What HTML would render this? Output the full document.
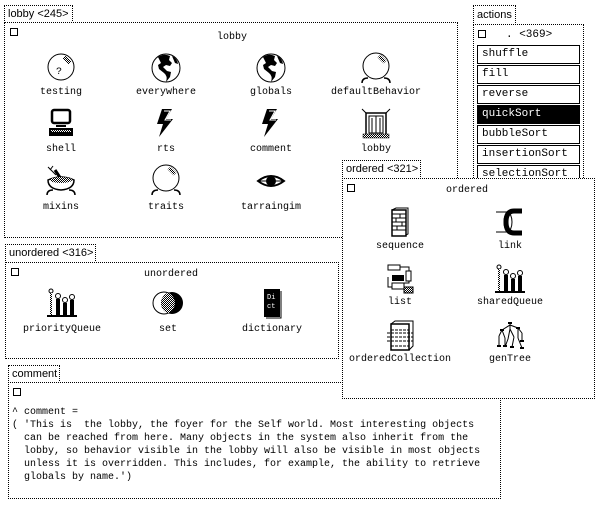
<!DOCTYPE html>
<html><head><meta charset="utf-8"><style>
*{margin:0;padding:0;box-sizing:border-box}
body{width:600px;height:506px;background:#fff;position:relative;overflow:hidden;font-family:"Liberation Mono",monospace;font-size:10px;color:#000}
.box{position:absolute;border:1px dotted #000;background:#fff}
.tab{position:absolute;border:1px dotted #000;border-bottom:none;background:#fff;font-family:"Liberation Sans",sans-serif;font-size:11px;line-height:16px;padding-left:3px}
.cb{position:absolute;width:8px;height:8px;border:1px solid #000}
.lab{position:absolute;width:160px;margin-left:-80px;text-align:center;line-height:12px;white-space:nowrap}
.ic{position:absolute;width:32px;height:32px;margin-left:-16px}
.btn{position:absolute;left:3px;width:103px;height:19px;border:1px solid #000;padding-left:4px;line-height:17px;font-size:11px}
pre{font-family:"Liberation Mono",monospace;font-size:10px;line-height:13px;position:absolute}
.top{z-index:5}
</style></head><body>
<svg width="0" height="0" style="position:absolute">
<defs>
<pattern id="hat" width="2" height="2" patternUnits="userSpaceOnUse"><rect width="2" height="2" fill="#fff"/><rect width="1" height="1" fill="#000"/><rect x="1" y="1" width="1" height="1" fill="#000"/></pattern>
<symbol id="ball" viewBox="0 0 32 32"><circle cx="16" cy="15" r="13" fill="#fff" stroke="#000"/><path d="M19 5l6 6" stroke="url(#hat)" stroke-width="4"/></symbol>
<symbol id="stand" viewBox="0 0 32 32"><circle cx="16" cy="14" r="13" fill="#fff" stroke="#000"/><path d="M19 4l6 6" stroke="url(#hat)" stroke-width="4"/><path d="M2 31q0-5 6-5M30 31q0-5-6-5" fill="none" stroke="#000" stroke-width="1.5"/></symbol>
<symbol id="globe" viewBox="0 0 32 32"><circle cx="16" cy="16" r="14" fill="#fff" stroke="#000"/><path d="M8 5q6-4 12-1l-1 4 3 3-2 3-4-1-3 2 4 4 4 1-1 5-4 5q2-6-2-9l-5-4-1-4 3-2z" fill="#000"/><path d="M22 4q5 2 6 8l-3-1z" fill="#000"/></symbol>
<symbol id="bolt" viewBox="0 0 32 32"><path d="M12 2h10l-6 10h7l-14 18 4-13h-6z" fill="#000"/><path d="M14 4h6l-5 9h6" fill="none" stroke="#fff" stroke-width="1"/></symbol>
<symbol id="shell" viewBox="0 0 32 32"><rect x="7" y="3" width="18" height="13" rx="2" fill="#fff" stroke="#000" stroke-width="2.5"/><rect x="11" y="18" width="10" height="2" fill="#000"/><rect x="4" y="21" width="24" height="8" fill="#000"/><rect x="6" y="23" width="20" height="2" fill="url(#hat)"/></symbol>
<symbol id="bld" viewBox="0 0 32 32"><path d="M2 2l5 5M30 2l-5 5" stroke="#000"/><rect x="6" y="6" width="20" height="22" fill="#fff" stroke="#000" stroke-width="1.5"/><rect x="9" y="9" width="14" height="17" fill="none" stroke="#000"/><path d="M16 9v17M12 11v15M20 11v15" stroke="#000"/><rect x="3" y="27" width="26" height="4" fill="url(#hat)" stroke="#000" stroke-width=".5"/></symbol>
<symbol id="bowl" viewBox="0 0 32 32"><path d="M3 3l8 8M8 2l-3 4" stroke="#000"/><path d="M10 6l8 12" stroke="#000" stroke-width="3"/><path d="M3 16q13-6 26 0q0 9-13 10q-13-1-13-10z" fill="#fff" stroke="#000" stroke-width="1.5"/><ellipse cx="16" cy="16" rx="11" ry="3" fill="url(#hat)"/><path d="M2 31q0-5 6-5M30 31q0-5-6-5" fill="none" stroke="#000" stroke-width="1.5"/></symbol>
<symbol id="eye" viewBox="0 0 32 32"><path d="M3 17q13-10 26 0q-13 10-26 0z" fill="#fff" stroke="#000" stroke-width="2"/><circle cx="16" cy="17" r="5" fill="#000"/><path d="M3 17h26" stroke="#000"/></symbol>
<symbol id="queue" viewBox="0 0 32 32"><circle cx="5" cy="4" r="2" fill="#fff" stroke="#000"/><path d="M5 6v22" stroke="url(#hat)" stroke-width="2"/><circle cx="12" cy="9" r="2.5" fill="#fff" stroke="#000"/><rect x="10" y="12" width="4" height="16" fill="#000"/><circle cx="19" cy="13" r="2.5" fill="#fff" stroke="#000"/><rect x="17" y="16" width="4" height="12" fill="#000"/><circle cx="26" cy="10" r="2.5" fill="#fff" stroke="#000"/><rect x="24" y="13" width="4" height="15" fill="#000"/><rect x="1" y="28" width="30" height="2" fill="#000"/></symbol>
<symbol id="set" viewBox="0 0 32 32"><circle cx="20" cy="16" r="11" fill="#000"/><circle cx="12" cy="16" r="11" fill="none" stroke="#000"/><path d="M16 5.8a11 11 0 0 1 0 20.4a11 11 0 0 1 0-20.4z" fill="url(#hat)"/></symbol>
<symbol id="dict" viewBox="0 0 32 32"><rect x="8" y="2" width="16" height="28" fill="#000"/><path d="M25 4v27h-15" fill="none" stroke="#000"/><text x="11" y="12" font-size="7" fill="#fff" font-family="Liberation Mono">Di</text><text x="11" y="21" font-size="7" fill="#fff" font-family="Liberation Mono">ct</text></symbol>
<symbol id="seq" viewBox="0 0 32 32"><path d="M8 4l4-2h12v26l-4 2" fill="#fff" stroke="#000"/><rect x="8" y="4" width="14" height="26" fill="#fff" stroke="#000" stroke-width="1.5"/><path d="M8 8h14M8 12h14M8 16h14M8 20h14M8 24h14M16 8v4M12 12v4M18 16v4M13 20v4" stroke="#000"/></symbol>
<symbol id="link" viewBox="0 0 32 32"><path d="M28 5h-8q-8 0-8 11t8 11h8" fill="none" stroke="#000" stroke-width="5"/><ellipse cx="14" cy="16" rx="4" ry="9" fill="none" stroke="#000"/><path d="M2 6h12M2 26h12" stroke="#000"/></symbol>
<symbol id="list" viewBox="0 0 32 32"><rect x="4" y="2" width="12" height="5" fill="#fff" stroke="#000"/><rect x="22" y="8" width="5" height="10" fill="#fff" stroke="#000"/><rect x="8" y="12" width="12" height="6" fill="#000"/><rect x="8" y="20" width="12" height="6" fill="#fff" stroke="#000"/><rect x="20" y="24" width="9" height="6" fill="url(#hat)" stroke="#000"/><path d="M16 4h9v4M4 14v10h4M25 18v2h-5" fill="none" stroke="#000"/></symbol>
<symbol id="oc" viewBox="0 0 32 32"><rect x="7" y="4" width="18" height="26" fill="#fff" stroke="#000" stroke-width="1.5"/><path d="M7 4l4-3h18v25l-4 4" fill="none" stroke="#000"/><path d="M3 13h26M3 17h26M3 21h26M7 10h18M7 26h18" stroke="#000" stroke-dasharray="3 1"/></symbol>
<symbol id="tree" viewBox="0 0 32 32"><path d="M16 3v6M16 5l-8 5M16 5l8 3M24 8l4 5M8 10l-3 6M8 10l3 8M16 9l-2 10M16 9l4 8M24 8v10M5 16v10M11 18v8M14 19l-3 8M20 17l-2 10M24 18l4 10M28 13v8" stroke="#000"/><g fill="#000"><rect x="14" y="2" width="4" height="2"/><rect x="6" y="9" width="4" height="2"/><rect x="22" y="7" width="4" height="2"/><rect x="3" y="25" width="4" height="2"/><rect x="9" y="25" width="4" height="2"/><rect x="16" y="26" width="4" height="2"/><rect x="26" y="27" width="4" height="2"/><rect x="26" y="20" width="4" height="2"/></g></symbol>
</defs></svg>

<!-- lobby -->
<div class="tab" style="left:4px;top:5px;width:69px;height:18px">lobby &lt;245&gt;</div>
<div class="box" style="left:4px;top:22px;width:454px;height:216px">
<div class="cb" style="left:5px;top:5px"></div>
<div class="lab" style="left:227px;top:9px">lobby</div>
<svg class="ic" style="left:56px;top:29px"><use href="#ball"/><text x="11" y="22" font-size="10" font-family="Liberation Mono">?</text></svg>
<svg class="ic" style="left:161px;top:29px"><use href="#globe"/></svg>
<svg class="ic" style="left:266px;top:29px"><use href="#globe"/></svg>
<svg class="ic" style="left:371px;top:29px"><use href="#stand"/></svg>
<div class="lab" style="left:56px;top:64px">testing</div>
<div class="lab" style="left:161px;top:64px">everywhere</div>
<div class="lab" style="left:266px;top:64px">globals</div>
<div class="lab" style="left:371px;top:64px">defaultBehavior</div>
<svg class="ic" style="left:56px;top:84px"><use href="#shell"/></svg>
<svg class="ic" style="left:161px;top:84px"><use href="#bolt"/></svg>
<svg class="ic" style="left:266px;top:84px"><use href="#bolt"/></svg>
<svg class="ic" style="left:371px;top:84px"><use href="#bld"/></svg>
<div class="lab" style="left:56px;top:121px">shell</div>
<div class="lab" style="left:161px;top:121px">rts</div>
<div class="lab" style="left:266px;top:121px">comment</div>
<div class="lab" style="left:371px;top:121px">lobby</div>
<svg class="ic" style="left:56px;top:141px"><use href="#bowl"/></svg>
<svg class="ic" style="left:161px;top:141px"><use href="#stand"/></svg>
<svg class="ic" style="left:266px;top:141px"><use href="#eye"/></svg>
<div class="lab" style="left:56px;top:179px">mixins</div>
<div class="lab" style="left:161px;top:179px">traits</div>
<div class="lab" style="left:266px;top:179px">tarraingim</div>
</div>

<!-- actions -->
<div class="tab" style="left:473px;top:5px;width:43px;height:20px;line-height:19px">actions</div>
<div class="box" style="left:473px;top:24px;width:111px;height:170px">
<div class="cb" style="left:4px;top:5px"></div>
<div style="position:absolute;left:32px;top:4px;font-size:11px">. &lt;369&gt;</div>
<div class="btn" style="top:20px">shuffle</div>
<div class="btn" style="top:40px">fill</div>
<div class="btn" style="top:60px">reverse</div>
<div class="btn" style="top:80px;background:#000;color:#fff">quickSort</div>
<div class="btn" style="top:100px">bubbleSort</div>
<div class="btn" style="top:120px">insertionSort</div>
<div class="btn" style="top:140px">selectionSort</div>
</div>

<!-- unordered -->
<div class="tab" style="left:5px;top:244px;width:91px;height:19px">unordered &lt;316&gt;</div>
<div class="box" style="left:5px;top:262px;width:334px;height:97px">
<div class="cb" style="left:5px;top:5px"></div>
<div class="lab" style="left:165px;top:6px">unordered</div>
<svg class="ic" style="left:56px;top:24px"><use href="#queue"/></svg>
<svg class="ic" style="left:162px;top:24px"><use href="#set"/></svg>
<svg class="ic" style="left:266px;top:24px"><use href="#dict"/></svg>
<div class="lab" style="left:56px;top:61px">priorityQueue</div>
<div class="lab" style="left:162px;top:61px">set</div>
<div class="lab" style="left:266px;top:61px">dictionary</div>
</div>

<!-- comment -->
<div class="tab" style="left:8px;top:365px;width:52px;height:18px">comment</div>
<div class="box" style="left:8px;top:382px;width:493px;height:117px">
<div class="cb" style="left:4px;top:5px"></div>
<pre style="left:3px;top:23px">^ comment =
( 'This is  the lobby, the foyer for the Self world. Most interesting objects
  can be reached from here. Many objects in the system also inherit from the
  lobby, so behavior visible in the lobby will also be visible in most objects
  unless it is overridden. This includes, for example, the ability to retrieve
  globals by name.')</pre>
</div>

<!-- ordered (on top) -->
<div class="tab top" style="left:342px;top:160px;width:79px;height:19px">ordered &lt;321&gt;</div>
<div class="box top" style="left:342px;top:178px;width:253px;height:221px">
<div class="cb" style="left:4px;top:5px"></div>
<div class="lab" style="left:124px;top:6px">ordered</div>
<svg class="ic" style="left:57px;top:27px"><use href="#seq"/></svg>
<svg class="ic" style="left:167px;top:27px"><use href="#link"/></svg>
<div class="lab" style="left:57px;top:62px">sequence</div>
<div class="lab" style="left:167px;top:62px">link</div>
<svg class="ic" style="left:57px;top:84px"><use href="#list"/></svg>
<svg class="ic" style="left:167px;top:84px"><use href="#queue"/></svg>
<div class="lab" style="left:57px;top:118px">list</div>
<div class="lab" style="left:167px;top:118px">sharedQueue</div>
<svg class="ic" style="left:57px;top:141px"><use href="#oc"/></svg>
<svg class="ic" style="left:167px;top:141px"><use href="#tree"/></svg>
<div class="lab" style="left:57px;top:175px">orderedCollection</div>
<div class="lab" style="left:167px;top:175px">genTree</div>
</div>
</body></html>
